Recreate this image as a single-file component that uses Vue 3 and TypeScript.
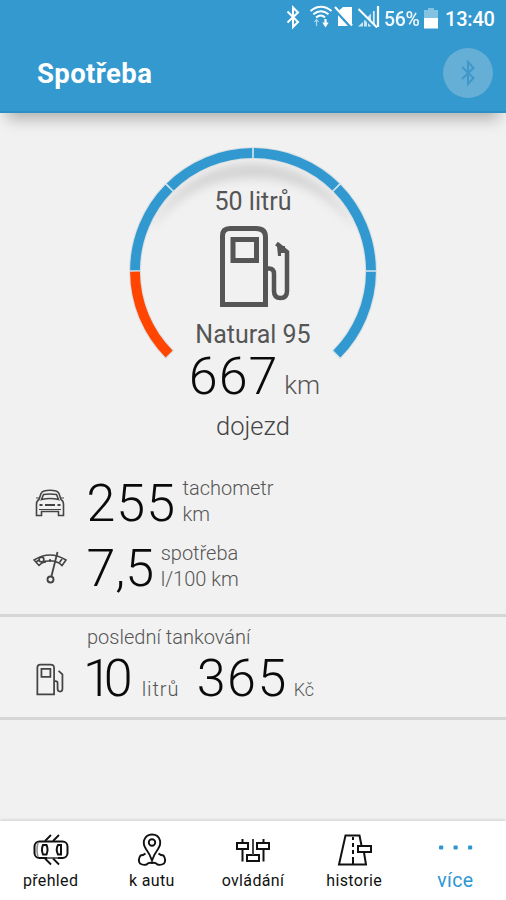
<script setup lang="ts">
interface Segment { from: number; to: number; color: string }

const C = 125
const R = 118

function point(deg: number, r: number): string {
  const a = (deg * Math.PI) / 180
  return `${(C + r * Math.cos(a)).toFixed(2)} ${(C + r * Math.sin(a)).toFixed(2)}`
}

function arc(from: number, to: number): string {
  const large = to - from > 180 ? 1 : 0
  return `M${point(from, R)}A${R} ${R} 0 ${large} 1 ${point(to, R)}`
}

const blue = '#3199cf'
const segments: Segment[] = [
  { from: 135.3, to: 179.7, color: '#ff4500' },
  { from: 180.4, to: 224.6, color: blue },
  { from: 225.4, to: 269.6, color: blue },
  { from: 270.4, to: 314.6, color: blue },
  { from: 315.4, to: 359.6, color: blue },
  { from: 0.4, to: 44.7, color: blue },
]
</script>

<template>
  <div class="screen">
    <header class="header">
      <div class="status">
        <svg class="status-icons" width="110" height="28" viewBox="0 0 110 28" fill="none" stroke="#fff">
          <path d="M2.500 8.500L13 19L8 24V4.500L13 9.500L2.500 19.500" stroke-width="2" />
          <g stroke-width="1.900" transform="translate(.5 1)">
            <path d="M25 7Q35.500 -1.500 46 7M27.800 10.300Q35.500 4 43 10.300M30.500 13.500Q35.500 9.500 39.500 13.500" />
            <path d="M40 15V20" stroke-width="2.200" />
            <path d="M36.800 18.500H43.200L40 23.500Z" fill="#fff" stroke="none" />
            <path d="M31 22V16M29 18L31 15.500L33 18" stroke-width="1.200" opacity=".6" />
          </g>
          <g transform="translate(1 1)">
            <path d="M57 3H66V22H52V7.500Z" fill="#fff" stroke="none" />
            <path d="M48.500 4.500L65 22.500" stroke="#3399cf" stroke-width="4" />
            <path d="M49 3L66 21.500" stroke-width="2" />
          </g>
          <g transform="translate(1 1)">
            <path d="M72 22.500H77V18ZM78 22.500V16.500L81 13.500V22.500ZM82 22.500V12.500L85 9.500V22.500Z" fill="#fff" stroke="none" opacity=".75" />
            <path d="M87.800 23V7" stroke-width="1.800" opacity=".8" />
            <path d="M92 23V2" stroke-width="2.200" />
            <path d="M72.500 7.500L89 23.500" stroke="#3399cf" stroke-width="3.500" />
            <path d="M72.500 5L91 23.500" stroke-width="1.900" />
          </g>
        </svg>
        <span class="percent">56%</span>
        <svg class="battery" width="14" height="21" viewBox="0 0 14 21" fill="#fff">
          <path d="M4 0H10V2H14V10H0V2H4Z" opacity=".4" />
          <path d="M0 10H14V20.500H0Z" />
        </svg>
        <span class="clock">13:40</span>
      </div>
      <div class="titlebar">
        <h1>Spotřeba</h1>
        <button class="bt" aria-label="Bluetooth">
          <svg width="16" height="28" viewBox="0 0 16 28" fill="none" stroke="#3f98c9" stroke-width="2">
            <path d="M2 8L13.500 19L8 25V3L13.500 9L2 20" />
          </svg>
        </button>
      </div>
    </header>

    <main class="content">
      <section class="gauge">
        <svg class="ring" width="250" height="250" viewBox="0 0 250 250" fill="none">
          <defs>
            <filter id="soft" x="-20%" y="-40%" width="140%" height="180%"><feGaussianBlur stdDeviation="5" /></filter>
            <clipPath id="inside"><circle cx="125" cy="125" r="113" /></clipPath>
          </defs>
          <g clip-path="url(#inside)">
            <path d="M22 78A113 113 0 0 1 228 78Q190 26 125 26T22 78Z" fill="#aaa" opacity=".42" filter="url(#soft)" transform="translate(0 6)" />
          </g>
          <path :d="arc(134.6, 405.4)" stroke="#dcdfe1" stroke-width="12" />
          <path :d="arc(134.9, 405.1)" stroke="#d4e6f0" stroke-width="10" />
          <path v-for="s in segments" :key="s.from" :d="arc(s.from, s.to)" :stroke="s.color" stroke-width="9.800" />
        </svg>
        <div class="readout">
          <div class="capacity">50 litrů</div>
          <svg class="pump" width="72" height="84" viewBox="0 0 72 84" fill="none" stroke="#555" stroke-width="5">
            <path d="M3.500 79.500V11Q3.500 3.500 11 3.500H37Q46.500 3.500 46.500 12V79.500Z" />
            <path d="M14 14.500H37.500V35.500H14Z" />
            <path d="M47 43.500H50Q55 43.500 55 49V66Q55 73 61.500 73Q68 73 68 66V27L57.500 18.500" stroke-width="4.500" />
            <path d="M58 21H66V28H62V31H59Z" fill="#555" stroke="none" />
          </svg>
          <div class="fuel">Natural 95</div>
          <div class="range"><span class="num">667</span><span class="range-unit">km</span></div>
          <div class="range-label">dojezd</div>
        </div>
      </section>

      <section class="stats">
        <div class="row">
          <svg class="icon" width="30" height="28" viewBox="0 0 30 28" fill="none" stroke="#444" stroke-width="1.600">
            <path d="M4 10.500L6 4.500Q7 2.500 9 2Q15 .6 21 2Q23 2.500 24 4.500L26 10.500Q28.500 12 28.500 15V26.500H23.500V22.500H6.500V26.500H1.500V15Q1.500 12 4 10.500Z" />
            <path d="M6.500 10.500L8.500 5.500Q15 4.500 21.500 5.500L23.500 10.500Q15 8.500 6.500 10.500Z" />
            <path d="M4.500 16H7.500M10 16H20M22.500 16H25.500" stroke-width="1.800" />
            <path d="M4 20.500H26M1 9H4M26 9H29" stroke-width="1.200" />
          </svg>
          <span class="num">255</span>
          <div class="unit"><span>tachometr</span><span>km</span></div>
        </div>
        <div class="row">
          <svg class="icon dial" width="34" height="34" viewBox="0 0 34 34" fill="none" stroke="#444" stroke-width="1.600">
            <path d="M1 9Q17 -1 33 9L29 14.500L26 12Q17 7.500 9 12L6 14.500Z" />
            <path d="M12 9.500V12M17 8V11M29 8L26.500 11.500M3 11L6 9" />
            <circle cx="8.500" cy="8.500" r="2.400" />
            <path d="M24.500 1L18.500 25" stroke-width="1.800" />
            <circle cx="17.500" cy="28.500" r="3" stroke-width="1.900" />
          </svg>
          <span class="num comma">7,5</span>
          <div class="unit"><span>spotřeba</span><span>l/100 km</span></div>
        </div>
      </section>

      <section class="last">
        <div class="last-title">poslední tankování</div>
        <div class="last-row">
          <svg class="icon small-pump" width="28" height="33" viewBox="0 0 72 84" fill="none" stroke="#444" stroke-width="4.500">
            <path d="M3.500 80V11Q3.500 3.500 11 3.500H37Q46.500 3.500 46.500 12V80Z" />
            <path d="M14 14.500H37V35.500H14Z" />
            <path d="M47 46H50Q55.500 46 55.500 51V66Q55.500 73 62 73Q68 73 68 66V29L58 20" />
          </svg>
          <span class="num liters">10</span><span class="last-unit l-unit">litrů</span>
          <span class="num cost">365</span><span class="last-unit k-unit">Kč</span>
        </div>
      </section>
    </main>

    <nav class="nav">
      <a class="item">
        <svg width="36" height="36" viewBox="0 0 36 36" fill="none" stroke="#111" stroke-width="2">
          <rect x="1.500" y="9.500" width="33" height="16.500" rx="5" />
          <path d="M10 13H13.500Q15.500 17.500 13.500 22.500H10Q8 17.500 10 13ZM25 13H28V22.500H25Q22.500 17.500 25 13Z" />
          <path d="M14 26H25" stroke="#666" /><path d="M5 10.500Q3 17.500 5 25" stroke="#888" stroke-width="1.500" />
          <path d="M12 9L18 3M20 9L26 3M12 26.500L18 32.500M20 26.500L26 32.500" stroke-width="1.800" />
        </svg>
        <span>přehled</span>
      </a>
      <a class="item">
        <svg width="36" height="36" viewBox="0 0 36 36" fill="none" stroke="#111" stroke-width="1.900">
          <path d="M18 28.500Q16 22.500 12 17Q9 12.500 10 8.500Q12 2.500 18 2.500Q24.500 2.500 26 8.500Q27 12.500 24 17Q20 22.500 18 28.500Z" />
          <circle cx="18" cy="10.500" r="3.200" />
          <path d="M11.500 21.500Q9 23.500 6.500 23.500Q3.500 28 6 31.500Q9 33.500 12.500 32.500Q15 30 18 31Q21 30 23.500 32.500Q27 33.500 30 31.500Q32.500 28 29.500 23.500Q27 23.500 24.500 21.500" />
        </svg>
        <span>k autu</span>
      </a>
      <a class="item">
        <svg width="36" height="36" viewBox="0 0 36 36" fill="none" stroke="#111" stroke-width="2">
          <path d="M2 11H13V17H2ZM22 11H34V17H22ZM12 23H24V29H12Z" />
          <path d="M7.500 7V11M7.500 17V29.500M28.500 7V11M28.500 17V29.500" />
          <path d="M18 7V23" stroke="#444" />
        </svg>
        <span>ovládání</span>
      </a>
      <a class="item">
        <svg width="36" height="36" viewBox="0 0 36 36" fill="none" stroke="#111" stroke-width="2">
          <path d="M28 20.500L30 32.500H3L9.500 3.500H23.500L25.500 13.500" />
          <path d="M22 14H35V20H22Z" />
          <path d="M17 5V8M17 11V15M17 18V22M17 25V32" />
        </svg>
        <span>historie</span>
      </a>
      <a class="item active">
        <svg width="36" height="36" viewBox="0 0 36 36" fill="#2e97d3">
          <rect x="2" y="13.500" width="4.200" height="4" rx="1" />
          <rect x="16.500" y="13.500" width="4.200" height="4" rx="1" />
          <rect x="31" y="13.500" width="4.200" height="4" rx="1" />
        </svg>
        <span>více</span>
      </a>
    </nav>
  </div>
</template>

<style>
body { background: #f1f1f1; }
</style>

<style scoped>
.screen {
  width: 506px;
  height: 900px;
  display: flex;
  flex-direction: column;
  overflow: hidden;
  background: #f1f1f1;
  font-family: Roboto, "Open Sans", sans-serif;
  color: #111;
}
.header {
  box-sizing: border-box;
  height: 113px;
  flex: none;
  background: #3399cf;
  border-bottom: 2px solid #2b8fc6;
  box-shadow: 0 13px 14px -7px rgba(0, 0, 0, .27);
  color: #fff;
}
.status { height: 38px; display: flex; align-items: center; padding-left: 285px; }
.status-icons { margin-top: -4px; }
.status-icons, .battery { flex: none; }
.percent { width: 40px; margin-left: -11px; font-size: 19.500px; font-weight: 500; letter-spacing: -0.300px; opacity: .92; }
.battery { margin-top: -2px; }
.clock { margin-left: 7px; font-size: 20px; font-weight: 500; letter-spacing: -0.200px; }
.titlebar { height: 70px; display: flex; align-items: center; justify-content: space-between; padding: 0 13px 0 37px; }
h1 { margin: 2px 0 0; font-size: 27.500px; line-height: 32px; font-weight: 700; letter-spacing: .4px; }
.bt {
  width: 50px; height: 50px; padding: 0; border: 0; border-radius: 50%;
  background: #65aed5; display: grid; place-items: center;
}
.content { flex: 1; }
.gauge { display: grid; justify-items: center; height: 357.500px; }
.ring, .readout { grid-area: 1 / 1; }
.ring { margin-top: 33px; }
.readout { z-index: 1; width: 246px; padding-top: 74px; display: flex; flex-direction: column; align-items: center; color: #555; }
.capacity { height: 30px; line-height: 30px; font-size: 25px; }
.pump { margin: 8px 0 10.500px 4px; flex: none; }
.fuel { height: 30px; line-height: 30px; font-size: 25px; }
.range { height: 53px; line-height: 53px; padding-left: 3px; display: flex; align-items: baseline; gap: 6px; }
.range-unit { font-size: 26px; font-weight: 300; }
.range-label { margin-top: 8px; line-height: 30px; font-size: 25.500px; font-weight: 300; color: #444; }
.num { font-size: 52px; font-weight: 300; letter-spacing: 1px; color: #0a0a0a; }
.row { height: 65px; display: grid; grid-template-columns: 86.500px auto 1fr; align-items: center; }
.icon { justify-self: start; margin-left: 34.500px; }
.dial { margin-left: 32.500px; }
.row .num { line-height: 65px; }
.row .comma { letter-spacing: 0; }
.unit { display: flex; flex-direction: column; align-items: flex-start; margin: -3px 0 0 6.500px; font-size: 20px; line-height: 25.600px; font-weight: 300; color: #555; }
.last {
  box-sizing: border-box; height: 106px; margin-top: 13.500px; padding-top: 7px;
  border-top: 3px solid #d6d6d6; border-bottom: 3px solid #d6d6d6; background: #f2f2f2;
}
.last-title { padding-left: 87px; line-height: 26px; font-size: 20px; font-weight: 300; color: #555; }
.last-row { height: 58px; display: flex; align-items: baseline; line-height: 58px; }
.small-pump { width: 28px; margin: 0 19px 0 36px; align-self: center; flex: none; }
.liters { letter-spacing: -8px; }
.cost { letter-spacing: 1.500px; }
.last-unit { font-size: 20px; font-weight: 300; color: #555; }
.l-unit { width: 55px; margin-left: 17px; letter-spacing: .9px; }
.k-unit { margin-left: 6px; font-size: 18px; }
.nav {
  height: 79px; flex: none; display: grid; grid-template-columns: repeat(5, 1fr);
  background: #fff; box-shadow: 0 -1px 3px rgba(0, 0, 0, .14);
}
.item { display: flex; flex-direction: column; align-items: center; padding-top: 11px; font-size: 16px; line-height: 26px; letter-spacing: .35px; }
.active { color: #2e97d3; font-size: 19.500px; line-height: 25px; }
</style>
